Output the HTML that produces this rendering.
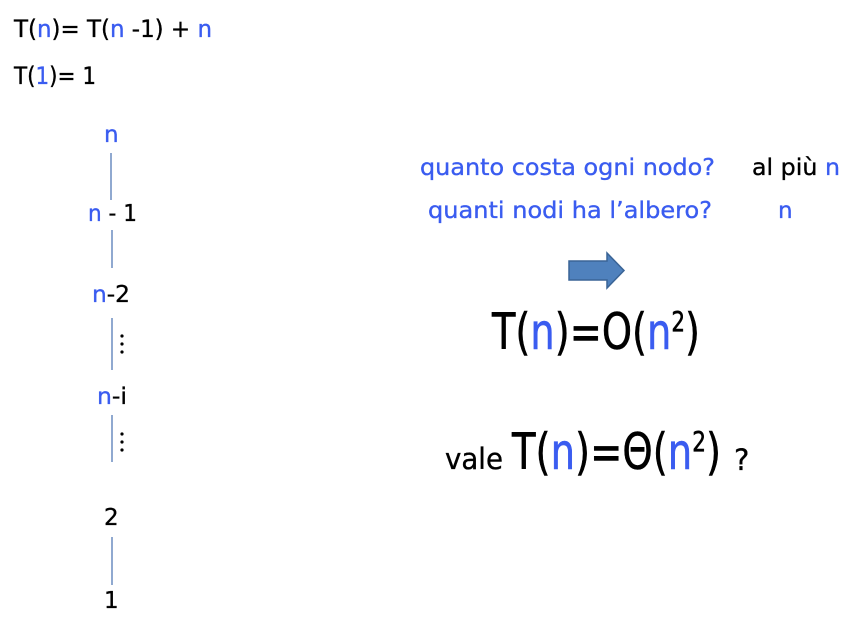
<!DOCTYPE html>
<html><head><meta charset="utf-8"><style>
html,body{margin:0;padding:0;background:#fff;}
svg{display:block;}
text{font-family:"DejaVu Sans","Liberation Sans",sans-serif;fill:#000;stroke:#000;stroke-width:0.35;}
.b{fill:#3a5cf0;stroke:#3a5cf0;}
</style></head><body>
<svg width="853" height="620" viewBox="0 0 853 620" xmlns="http://www.w3.org/2000/svg">
<text x="14" y="37" font-size="24" textLength="198" lengthAdjust="spacingAndGlyphs">T(<tspan class="b">n</tspan>)= T(<tspan class="b">n</tspan> -1) + <tspan class="b">n</tspan></text>
<text x="14" y="84" font-size="24" textLength="82" lengthAdjust="spacingAndGlyphs">T(<tspan class="b">1</tspan>)= 1</text>

<g stroke="#6a8cc0" stroke-width="1.5">
<line x1="111" y1="153" x2="111" y2="200"/>
<line x1="112" y1="230" x2="112" y2="268"/>
<line x1="112" y1="318" x2="112" y2="370"/>
<line x1="112" y1="415" x2="112" y2="462"/>
<line x1="112" y1="537" x2="112" y2="585"/>
</g>
<g fill="#000">
<circle cx="122" cy="336" r="1.6"/><circle cx="122" cy="344" r="1.6"/><circle cx="122" cy="352" r="1.6"/>
<circle cx="122" cy="434" r="1.6"/><circle cx="122" cy="442" r="1.6"/><circle cx="122" cy="450" r="1.6"/>
</g>
<text class="b" x="104" y="142" font-size="23">n</text>
<text x="88" y="221" font-size="23" textLength="49" lengthAdjust="spacingAndGlyphs"><tspan class="b">n</tspan> - 1</text>
<text x="92" y="302" font-size="23" textLength="38" lengthAdjust="spacingAndGlyphs"><tspan class="b">n</tspan>-2</text>
<text x="97" y="404" font-size="23" textLength="30" lengthAdjust="spacingAndGlyphs"><tspan class="b">n</tspan>-i</text>
<text x="104" y="525" font-size="23">2</text>
<text x="104" y="608" font-size="23">1</text>

<text class="b" x="420" y="175" font-size="23" textLength="295" lengthAdjust="spacingAndGlyphs">quanto costa ogni nodo?</text>
<text x="752" y="175" font-size="23" textLength="88" lengthAdjust="spacingAndGlyphs">al più <tspan class="b">n</tspan></text>
<text class="b" x="428" y="218" font-size="23" textLength="284" lengthAdjust="spacingAndGlyphs">quanti nodi ha l’albero?</text>
<text class="b" x="778" y="218" font-size="23">n</text>

<path d="M569 261 H607 V253 L624 270.5 L607 288 V280 H569 Z" fill="#4f81bd" stroke="#3a6496" stroke-width="1.5"/>

<text x="492" y="349" font-size="50" textLength="208" lengthAdjust="spacingAndGlyphs" style="stroke-width:0.6">T(<tspan class="b">n</tspan>)=O(<tspan class="b">n</tspan><tspan font-size="28" dy="-18">2</tspan><tspan dy="18">)</tspan></text>
<text x="445" y="469" font-size="29" textLength="58" lengthAdjust="spacingAndGlyphs">vale</text>
<text x="512" y="469" font-size="50" textLength="209" lengthAdjust="spacingAndGlyphs" style="stroke-width:0.6">T(<tspan class="b">n</tspan>)=Θ(<tspan class="b">n</tspan><tspan font-size="28" dy="-18">2</tspan><tspan dy="18">)</tspan></text>
<text x="734" y="470" font-size="29">?</text>
</svg>
</body></html>
